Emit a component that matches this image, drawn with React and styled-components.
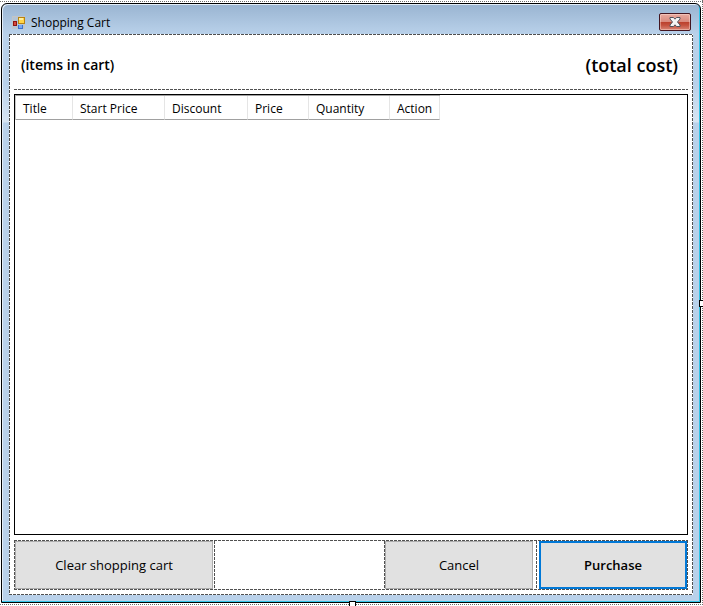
import React from "react";
import styled, { createGlobalStyle, css } from "styled-components";

const GlobalStyle = createGlobalStyle`
  *, *::before, *::after { box-sizing: border-box; }
  body {
    margin: 0;
    background: #ffffff;
    color: #000000;
    font: 12px/16px "Open Sans", "Noto Sans", sans-serif;
  }
`;

const dashX = "repeating-linear-gradient(90deg, #505050 0 3px, #ffffff 3px 4px)";
const dashY = "repeating-linear-gradient(180deg, #505050 0 3px, #ffffff 3px 4px)";
const dotX = "repeating-linear-gradient(90deg, #6e6e6e 0 1px, #ffffff 1px 2px)";
const dotY = "repeating-linear-gradient(180deg, #6e6e6e 0 1px, #ffffff 1px 2px)";

const dashedFrame = css`
  background:
    ${dashX} 0 0 / 100% 1px no-repeat,
    ${dashX} 0 100% / 100% 1px no-repeat,
    ${dashY} 0 0 / 1px 100% no-repeat,
    ${dashY} 100% 0 / 1px 100% no-repeat,
    #ffffff;
`;

const Designer = styled.div`
  position: relative;
  display: flex;
  min-height: 100vh;
  padding: 3px 2px 3px 1px;
  background:
    ${dotX} 0 1px / 100% 1px no-repeat,
    ${dotX} 0 calc(100% - 1px) / 100% 1px no-repeat,
    ${dotY} 100% 0 / 1px 100% no-repeat,
    #ffffff;
`;

const Handle = styled.span`
  position: absolute;
  border: 1px solid #000000;
  background: #ffffff;
  ${({ $side }) =>
    $side === "right"
      ? css`right: -2px; top: calc(50% - 3px); width: 6px; height: 7px;`
      : css`bottom: -2px; left: calc(50% - 3px); width: 7px; height: 7px;`}
`;

const Window = styled.section`
  flex: 1;
  display: flex;
  flex-direction: column;
  padding: 0 7px 7px 7px;
  border: 1px solid #000000;
  border-radius: 6px 6px 0 0;
  background: linear-gradient(180deg, #99b4d1 0, #b9d1ea 30px, #b9d1ea 80px, #d7e4f2 118px, #b9d1ea 119px);
  box-shadow: inset -1px -1px 0 #35c5e8, inset 1px 1px 0 #e4eef8;
`;

const TitleBar = styled.header`
  display: flex;
  align-items: center;
  gap: 6px;
  height: 30px;
  padding: 6px 2px 0 3px;
`;

const Title = styled.h1`
  flex: 1;
  margin: 0;
  padding-top: 2px;
  font-size: 12px;
  font-weight: 400;
`;

const CloseButton = styled.button`
  display: grid;
  place-items: center;
  width: 32px;
  height: 18px;
  padding: 0;
  border: 1px solid #431520;
  border-radius: 2px;
  background: linear-gradient(180deg, #e9aaa0 0, #d98a7d 48%, #bb3f2b 50%, #c4513e 70%, #d98676 100%);
  box-shadow: inset 0 0 0 1px rgba(255, 225, 215, 0.45);
`;

const Client = styled.main`
  flex: 1;
  display: flex;
  flex-direction: column;
  padding: 5px;
  ${dashedFrame}
`;

const Summary = styled.div`
  display: flex;
  align-items: center;
  justify-content: space-between;
  height: 51px;
  padding: 0 10px 0 7px;
  background: ${dashX} 0 100% / 100% 1px no-repeat;
`;

const ItemCount = styled.span`
  font-size: 14px;
  font-weight: 600;
`;

const TotalCost = styled.span`
  font-size: 18px;
  line-height: 24px;
  font-weight: 600;
`;

const ListView = styled.div`
  flex: 1;
  margin-top: 4px;
  border: 1px solid #000000;
`;

const Table = styled.table`
  border-collapse: separate;
  border-spacing: 0;
  table-layout: fixed;
  width: 425px;
  border-top: 1px solid #a0a0a0;
  border-left: 1px solid #c8c8c8;
`;

const HeaderCell = styled.th`
  width: ${({ $width }) => $width}px;
  height: 24px;
  padding: 2px 0 0 7px;
  border-right: 1px solid #e5e5e5;
  border-bottom: 1px solid #a0a0a0;
  font-weight: 400;
  text-align: left;
  white-space: nowrap;
`;

const Actions = styled.footer`
  display: grid;
  grid-template-columns: 200px 1fr 152px 151px;
  height: 50px;
  margin-top: 5px;
  padding: 1px 0 0 1px;
  ${dashedFrame}
`;

const ActionCell = styled.div`
  display: flex;
  padding: 0 ${({ $after }) => $after}px 0 ${({ $before }) => $before}px;
  background: ${({ $last }) => ($last ? "none" : css`${dashY} 100% 0 / 1px 100% no-repeat`)};
`;

const ActionButton = styled.button`
  flex: 1;
  margin-bottom: 1px;
  padding: 0;
  border: ${({ $primary }) => ($primary ? "2px solid #0078d7" : "1px solid #adadad")};
  background: #e1e1e1;
  color: #000000;
  font: ${({ $primary }) => ($primary ? 600 : 400)} 13px/18px "Open Sans", "Noto Sans", sans-serif;
`;

const FormIcon = () => (
  <svg width="13" height="13" viewBox="0 0 13 13" aria-hidden="true">
    <path d="M.5.5h12v12H.5z" fill="#b4c4d4" stroke="#c3c5c6" />
    <path d="M1 5h4v5H1z" fill="#8e1410" />
    <path d="M2 6h2v3H2z" fill="#d5493b" />
    <path d="M6 1h7v7H6z" fill="#b88211" />
    <path d="M7 2h5v5H7z" fill="#ffd54a" />
    <path d="M7 2h4v2H7z" fill="#fff0a0" />
    <path d="M6 9h5v4H6z" fill="#3c73ce" />
    <path d="M7 9h3v3H7z" fill="#78a9f3" />
  </svg>
);

const CloseIcon = () => (
  <svg width="12" height="10" viewBox="0 0 12 10" aria-hidden="true">
    <path
      d="M1 .5h3.500L6 2.200 7.500 .5H11v1.500L8.500 5 11 8v1.500H7.500L6 7.800 4.500 9.500H1V8L3.500 5 1 2z"
      fill="#f5f5f5"
      stroke="#50545e"
    />
  </svg>
);

const columns = [
  { label: "Title", width: 57 },
  { label: "Start Price", width: 92 },
  { label: "Discount", width: 83 },
  { label: "Price", width: 61 },
  { label: "Quantity", width: 81 },
  { label: "Action", width: 50 },
];

export default function App() {
  return (
    <>
      <GlobalStyle />
      <Designer>
        <Window>
          <TitleBar>
            <FormIcon />
            <Title>Shopping Cart</Title>
            <CloseButton type="button" aria-label="Close">
              <CloseIcon />
            </CloseButton>
          </TitleBar>
          <Client>
            <Summary>
              <ItemCount>(items in cart)</ItemCount>
              <TotalCost>(total cost)</TotalCost>
            </Summary>
            <ListView>
              <Table>
                <thead>
                  <tr>
                    {columns.map(({ label, width }) => (
                      <HeaderCell key={label} scope="col" $width={width}>
                        {label}
                      </HeaderCell>
                    ))}
                  </tr>
                </thead>
              </Table>
            </ListView>
            <Actions>
              <ActionCell $before={0} $after={2}>
                <ActionButton type="button">Clear shopping cart</ActionButton>
              </ActionCell>
              <ActionCell $before={0} $after={0} />
              <ActionCell $before={0} $after={4}>
                <ActionButton type="button">Cancel</ActionButton>
              </ActionCell>
              <ActionCell $before={2} $after={1} $last>
                <ActionButton type="submit" $primary>Purchase</ActionButton>
              </ActionCell>
            </Actions>
          </Client>
        </Window>
        <Handle $side="right" />
        <Handle $side="bottom" />
      </Designer>
    </>
  );
}
